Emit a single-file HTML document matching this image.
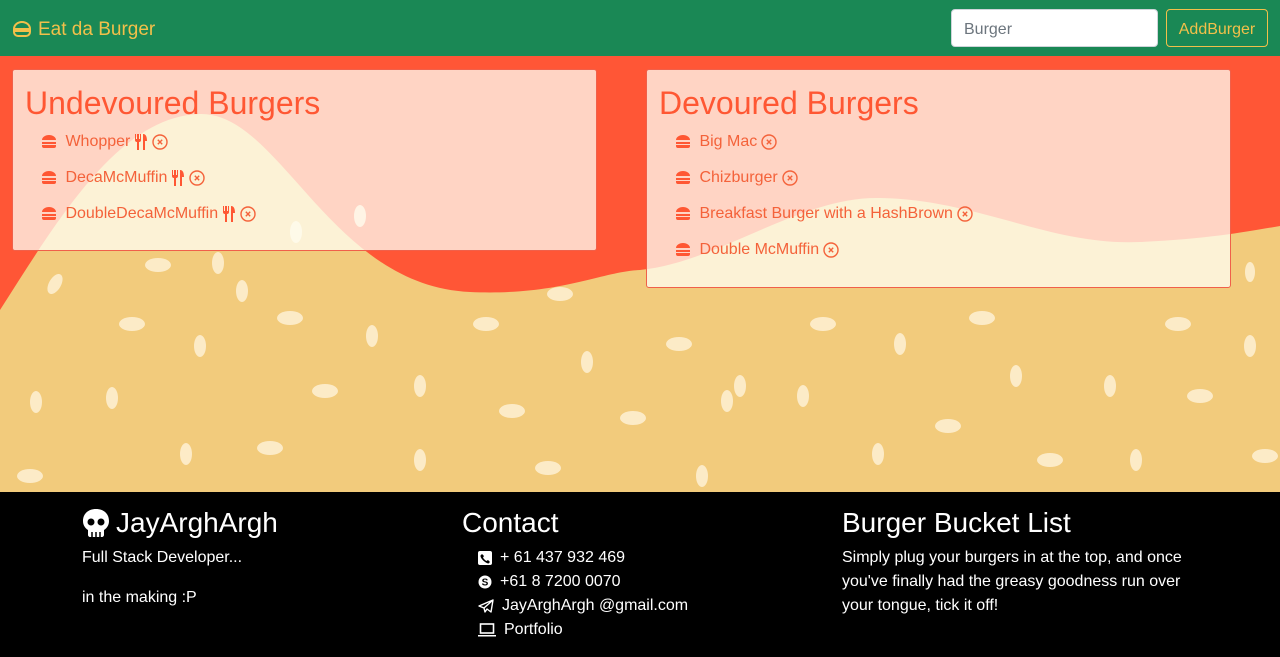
<!DOCTYPE html>
<html><head><meta charset="utf-8"><style>
*{box-sizing:border-box;margin:0;padding:0}
body{width:1280px;height:657px;overflow:hidden;font-family:"Liberation Sans",sans-serif;background:#000;position:relative}
nav{position:absolute;left:0;top:0;width:1280px;height:56px;background:#1a8855}
.brand{position:absolute;left:12px;top:19px;color:#f2c04a;font-size:19px;display:flex;align-items:center;gap:6px}
.inp{position:absolute;left:951px;top:9px;width:207px;height:38px;background:#fff;border:1px solid #ced4da;border-radius:4px;color:#6c757d;font-size:16px;padding:11px 12px 0}
.btn{position:absolute;left:1166px;top:9px;width:102px;height:38px;border:1px solid #f2c04a;border-radius:4px;color:#f2c04a;font-size:16px;text-align:center;line-height:39px}
.bg{position:absolute;left:0;top:56px;width:1280px;height:436px;background:#ff5636;overflow:hidden}
.card{position:absolute;background:rgba(255,255,244,0.75);border:1px solid #f0604a;border-radius:3px;padding:14px 12px}
.card h2{color:#ff5733;font-weight:normal;font-size:32px;line-height:38px;margin-bottom:2px}
.card li{list-style:none;color:#f4623a;font-size:16px;height:36px;line-height:36px;padding-left:16px;display:flex;align-items:center;gap:4px}
.card li svg{flex:none}
footer{position:absolute;left:0;top:492px;width:1280px;height:165px;background:#000;color:#fff}
.col{position:absolute;top:14px}
.col h3{font-size:28px;font-weight:normal;line-height:34px;margin-bottom:6px;display:flex;align-items:center;gap:6px}
.col p{font-size:16px;line-height:24px}
.ct{font-size:16px;line-height:24px;padding-left:16px}
.ct div{display:flex;align-items:center;gap:8px}
</style></head><body>
<nav>
<div class="brand"><svg width="20" height="18" viewBox="0 0 20 18"><g fill="none" stroke="#f2c04a" stroke-width="2"><path d="M2 8 a8 7 0 0 1 16 0z"/><path d="M2 10h16v1a4 4 0 0 1-4 4H6a4 4 0 0 1-4-4z"/></g></svg>Eat da Burger</div>
<div class="inp">Burger</div>
<div class="btn">AddBurger</div>
</nav>
<div class="bg">
<svg width="1280" height="436" style="position:absolute;left:0;top:0">
<path d="M0 254 C60 160 120 60 200 58 C280 56 330 230 470 236 C560 240 600 216 640 214 C720 206 800 140 880 142 C980 144 1050 190 1140 186 C1210 183 1250 175 1280 170 L1280 436 L0 436Z" fill="#f2cb7c"/>
<g fill="#fff3da" opacity="0.8">
<ellipse cx="158" cy="209" rx="13" ry="7"/><ellipse cx="218" cy="207" rx="6" ry="11"/><ellipse cx="55" cy="228" rx="6" ry="11" transform="rotate(30 55 228)"/><ellipse cx="132" cy="268" rx="13" ry="7"/><ellipse cx="290" cy="262" rx="13" ry="7"/><ellipse cx="242" cy="235" rx="6" ry="11"/><ellipse cx="372" cy="280" rx="6" ry="11"/><ellipse cx="486" cy="268" rx="13" ry="7"/><ellipse cx="560" cy="238" rx="13" ry="7"/><ellipse cx="587" cy="306" rx="6" ry="11"/><ellipse cx="679" cy="288" rx="13" ry="7"/><ellipse cx="823" cy="268" rx="13" ry="7"/><ellipse cx="900" cy="288" rx="6" ry="11"/><ellipse cx="982" cy="262" rx="13" ry="7"/><ellipse cx="1110" cy="330" rx="6" ry="11"/><ellipse cx="1178" cy="268" rx="13" ry="7"/><ellipse cx="1250" cy="290" rx="6" ry="11"/><ellipse cx="200" cy="290" rx="6" ry="11"/><ellipse cx="325" cy="335" rx="13" ry="7"/><ellipse cx="420" cy="330" rx="6" ry="11"/><ellipse cx="36" cy="346" rx="6" ry="11"/><ellipse cx="112" cy="342" rx="6" ry="11"/><ellipse cx="512" cy="355" rx="13" ry="7"/><ellipse cx="633" cy="362" rx="13" ry="7"/><ellipse cx="727" cy="345" rx="6" ry="11"/><ellipse cx="803" cy="340" rx="6" ry="11"/><ellipse cx="948" cy="370" rx="13" ry="7"/><ellipse cx="1016" cy="320" rx="6" ry="11"/><ellipse cx="1200" cy="340" rx="13" ry="7"/><ellipse cx="186" cy="398" rx="6" ry="11"/><ellipse cx="270" cy="392" rx="13" ry="7"/><ellipse cx="420" cy="404" rx="6" ry="11"/><ellipse cx="548" cy="412" rx="13" ry="7"/><ellipse cx="30" cy="420" rx="13" ry="7"/><ellipse cx="878" cy="398" rx="6" ry="11"/><ellipse cx="1050" cy="404" rx="13" ry="7"/><ellipse cx="1136" cy="404" rx="6" ry="11"/><ellipse cx="702" cy="420" rx="6" ry="11"/><ellipse cx="1265" cy="400" rx="13" ry="7"/><ellipse cx="360" cy="160" rx="6" ry="11"/><ellipse cx="296" cy="176" rx="6" ry="11"/><ellipse cx="740" cy="330" rx="6" ry="11"/><ellipse cx="1250" cy="216" rx="5" ry="10"/>
</g>
</svg>
<div class="card" style="left:12px;top:13px;width:585px;height:182px">
<h2>Undevoured Burgers</h2>
<ul>
<li><svg width="16" height="14" viewBox="0 0 16 14"><path d="M1 5a7 5 0 0 1 14 0z M1 7h14v2H1z M1 10h14v1a2 2 0 0 1-2 2H3a2 2 0 0 1-2-2z" fill="#ff5733"/></svg>&nbsp;Whopper <svg width="14" height="16" viewBox="0 0 14 16"><path d="M1 0v6a2 2 0 0 0 2 2v8h2V8a2 2 0 0 0 2-2V0H6v5H5V0H3v5H2V0z M9 16V0c3 0 4 3 4 7h-2v9z" fill="#ff5733"/></svg><svg width="16" height="16" viewBox="0 0 16 16"><circle cx="8" cy="8" r="7" fill="none" stroke="#f4623a" stroke-width="1.4"/><path d="M5.8 5.8l4.4 4.4M10.2 5.8l-4.4 4.4" stroke="#f4623a" stroke-width="1.4"/></svg></li>
<li><svg width="16" height="14" viewBox="0 0 16 14"><path d="M1 5a7 5 0 0 1 14 0z M1 7h14v2H1z M1 10h14v1a2 2 0 0 1-2 2H3a2 2 0 0 1-2-2z" fill="#ff5733"/></svg>&nbsp;DecaMcMuffin <svg width="14" height="16" viewBox="0 0 14 16"><path d="M1 0v6a2 2 0 0 0 2 2v8h2V8a2 2 0 0 0 2-2V0H6v5H5V0H3v5H2V0z M9 16V0c3 0 4 3 4 7h-2v9z" fill="#ff5733"/></svg><svg width="16" height="16" viewBox="0 0 16 16"><circle cx="8" cy="8" r="7" fill="none" stroke="#f4623a" stroke-width="1.4"/><path d="M5.8 5.8l4.4 4.4M10.2 5.8l-4.4 4.4" stroke="#f4623a" stroke-width="1.4"/></svg></li>
<li><svg width="16" height="14" viewBox="0 0 16 14"><path d="M1 5a7 5 0 0 1 14 0z M1 7h14v2H1z M1 10h14v1a2 2 0 0 1-2 2H3a2 2 0 0 1-2-2z" fill="#ff5733"/></svg>&nbsp;DoubleDecaMcMuffin <svg width="14" height="16" viewBox="0 0 14 16"><path d="M1 0v6a2 2 0 0 0 2 2v8h2V8a2 2 0 0 0 2-2V0H6v5H5V0H3v5H2V0z M9 16V0c3 0 4 3 4 7h-2v9z" fill="#ff5733"/></svg><svg width="16" height="16" viewBox="0 0 16 16"><circle cx="8" cy="8" r="7" fill="none" stroke="#f4623a" stroke-width="1.4"/><path d="M5.8 5.8l4.4 4.4M10.2 5.8l-4.4 4.4" stroke="#f4623a" stroke-width="1.4"/></svg></li>
</ul></div>
<div class="card" style="left:646px;top:13px;width:585px;height:219px">
<h2>Devoured Burgers</h2>
<ul>
<li><svg width="16" height="14" viewBox="0 0 16 14"><path d="M1 5a7 5 0 0 1 14 0z M1 7h14v2H1z M1 10h14v1a2 2 0 0 1-2 2H3a2 2 0 0 1-2-2z" fill="#ff5733"/></svg>&nbsp;Big Mac <svg width="16" height="16" viewBox="0 0 16 16"><circle cx="8" cy="8" r="7" fill="none" stroke="#f4623a" stroke-width="1.4"/><path d="M5.8 5.8l4.4 4.4M10.2 5.8l-4.4 4.4" stroke="#f4623a" stroke-width="1.4"/></svg></li>
<li><svg width="16" height="14" viewBox="0 0 16 14"><path d="M1 5a7 5 0 0 1 14 0z M1 7h14v2H1z M1 10h14v1a2 2 0 0 1-2 2H3a2 2 0 0 1-2-2z" fill="#ff5733"/></svg>&nbsp;Chizburger <svg width="16" height="16" viewBox="0 0 16 16"><circle cx="8" cy="8" r="7" fill="none" stroke="#f4623a" stroke-width="1.4"/><path d="M5.8 5.8l4.4 4.4M10.2 5.8l-4.4 4.4" stroke="#f4623a" stroke-width="1.4"/></svg></li>
<li><svg width="16" height="14" viewBox="0 0 16 14"><path d="M1 5a7 5 0 0 1 14 0z M1 7h14v2H1z M1 10h14v1a2 2 0 0 1-2 2H3a2 2 0 0 1-2-2z" fill="#ff5733"/></svg>&nbsp;Breakfast Burger with a HashBrown <svg width="16" height="16" viewBox="0 0 16 16"><circle cx="8" cy="8" r="7" fill="none" stroke="#f4623a" stroke-width="1.4"/><path d="M5.8 5.8l4.4 4.4M10.2 5.8l-4.4 4.4" stroke="#f4623a" stroke-width="1.4"/></svg></li>
<li><svg width="16" height="14" viewBox="0 0 16 14"><path d="M1 5a7 5 0 0 1 14 0z M1 7h14v2H1z M1 10h14v1a2 2 0 0 1-2 2H3a2 2 0 0 1-2-2z" fill="#ff5733"/></svg>&nbsp;Double McMuffin <svg width="16" height="16" viewBox="0 0 16 16"><circle cx="8" cy="8" r="7" fill="none" stroke="#f4623a" stroke-width="1.4"/><path d="M5.8 5.8l4.4 4.4M10.2 5.8l-4.4 4.4" stroke="#f4623a" stroke-width="1.4"/></svg></li>
</ul></div>
</div>
<footer>
<div class="col" style="left:82px"><h3><svg width="28" height="30" viewBox="0 0 28 30"><path d="M14 1C6 1 1 6 1 13c0 4 2 7 5 9v5c0 1 1 2 2 2h12c1 0 2-1 2-2v-5c3-2 5-5 5-9 0-7-5-12-13-12z" fill="#fff"/><circle cx="9" cy="14" r="3.5" fill="#000"/><circle cx="19" cy="14" r="3.5" fill="#000"/><path d="M10 24v5M14 24v5M18 24v5" stroke="#000" stroke-width="1.5"/></svg>JayArghArgh</h3>
<p>Full Stack Developer...</p><p style="margin-top:16px">in the making :P</p></div>
<div class="col" style="left:462px"><h3>Contact</h3>
<div class="ct">
<div><svg width="14" height="14" viewBox="0 0 14 14"><rect width="14" height="14" rx="2" fill="#fff"/><path d="M4 3l2 2-1 1.5c.8 1.5 2 2.7 3.5 3.5L10 9l2 2-1.5 1.5C7 12 2 7 2.5 4.5z" fill="#000"/></svg> + 61 437 932 469</div>
<div><svg width="14" height="14" viewBox="0 0 14 14"><circle cx="7" cy="7" r="6.5" fill="#fff"/><text x="7" y="10.5" font-size="10" font-weight="bold" text-anchor="middle" fill="#000" font-family="Liberation Sans">S</text></svg> +61 8 7200 0070</div>
<div><svg width="16" height="14" viewBox="0 0 16 14"><path d="M15 1L1 7l5 2 1 4 2-3 4 3z M6 9l9-8" fill="none" stroke="#fff" stroke-width="1.4" stroke-linejoin="round"/></svg> JayArghArgh @gmail.com</div>
<div><svg width="18" height="14" viewBox="0 0 18 14"><rect x="2.5" y="1" width="13" height="9" fill="none" stroke="#fff" stroke-width="1.6"/><path d="M0 12h18v1.5H0z" fill="#fff"/></svg> Portfolio</div>
</div></div>
<div class="col" style="left:842px;width:360px"><h3>Burger Bucket List</h3>
<p>Simply plug your burgers in at the top, and once you've finally had the greasy goodness run over your tongue, tick it off!</p></div>
</footer>
</body></html>
